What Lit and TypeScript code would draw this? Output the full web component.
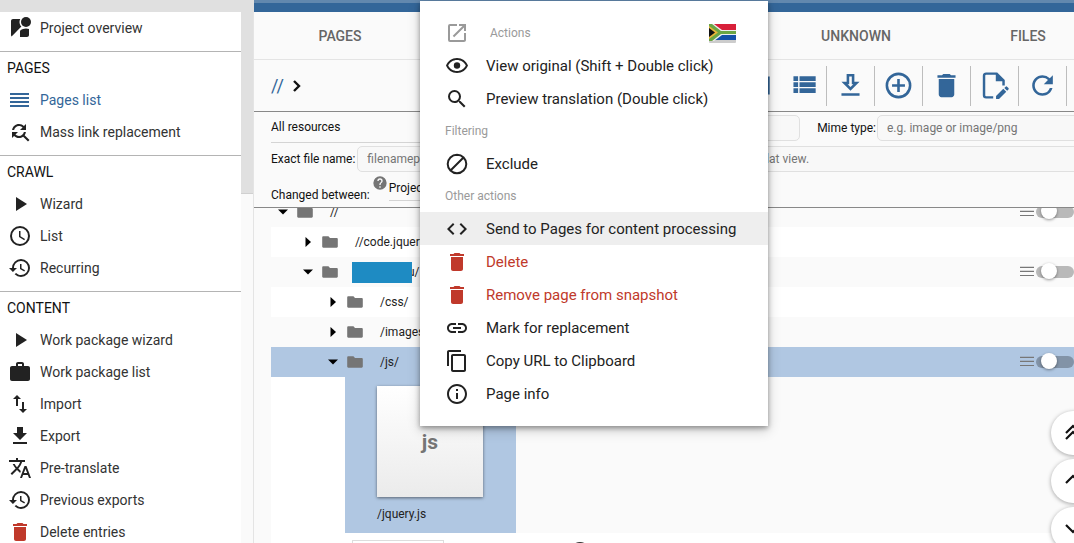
import { LitElement, html, css, svg, nothing } from "lit";
import { customElement, property } from "lit/decorators.js";
import { classMap } from "lit/directives/class-map.js";
import { styleMap } from "lit/directives/style-map.js";

const icons: Record<string, unknown> = {
  overview: svg`<path d="M12.56 14.33c-.34.27-.56.7-.56 1.17V21h7c1.1 0 2-.9 2-2v-5.98c-.94-.33-1.95-.52-3-.52-2.03 0-3.93.7-5.44 1.83z"/><circle cx="18" cy="6" r="5"/><path d="M11.5 6c0-1.08.27-2.1.74-3H5c-1.1 0-2 .9-2 2v14c0 .55.23 1.05.59 1.41l9.82-9.82C12.23 9.42 11.5 7.8 11.5 6z"/>`,
  lines: svg`<path d="M2 5h19v2H2zM2 9h19v2H2zM2 13h19v2H2zM2 17h19v2H2z"/>`,
  findReplace: svg`<path d="M11 6c1.38 0 2.63.56 3.54 1.46L12 10h6V4l-2.05 2.05C14.68 4.78 12.93 4 11 4c-3.53 0-6.43 2.61-6.92 6H6.1c.46-2.28 2.48-4 4.9-4zm5.64 9.14c.66-.9 1.12-1.97 1.28-3.14H15.9c-.46 2.28-2.48 4-4.9 4-1.38 0-2.63-.56-3.54-1.46L10 12H4v6l2.05-2.05C7.32 17.22 9.07 18 11 18c1.55 0 2.98-.51 4.14-1.36L20 21.49 21.49 20l-4.85-4.86z"/>`,
  play: svg`<path d="M8 5v14l11-7z"/>`,
  clock: svg`<path d="M12 2a10 10 0 1 0 0 20 10 10 0 0 0 0-20zm0 18a8 8 0 1 1 0-16 8 8 0 0 1 0 16zm.5-13H11v6l5.25 3.15.75-1.23-4.5-2.67z"/>`,
  history: svg`<path d="M13 3a9 9 0 0 0-9 9H1l3.89 3.89.07.14L9 12H6c0-3.87 3.13-7 7-7s7 3.13 7 7-3.13 7-7 7c-1.93 0-3.68-.79-4.94-2.06l-1.42 1.42A8.954 8.954 0 0 0 13 21a9 9 0 0 0 0-18zm-1 5v5l4.28 2.54.72-1.21-3.5-2.08V8H12z"/>`,
  work: svg`<path d="M20 6h-4V4c0-1.11-.89-2-2-2h-4c-1.11 0-2 .89-2 2v2H4c-1.11 0-1.99.89-1.99 2L2 19c0 1.11.89 2 2 2h16c1.11 0 2-.89 2-2V8c0-1.11-.89-2-2-2zm-6 0h-4V4h4v2z"/>`,
  importExport: svg`<path d="M9 3L5 6.99h3V14h2V6.99h3L9 3zm7 14.01V10h-2v7.01h-3L15 21l4-3.99h-3z"/>`,
  download: svg`<path d="M19 9h-4V3H9v6H5l7 7 7-7zM5 18v2h14v-2H5z"/>`,
  translate: svg`<path d="M12.87 15.07l-2.54-2.51.03-.03c1.74-1.94 2.98-4.17 3.71-6.53H17V4h-7V2H8v2H1v1.99h11.17C11.5 7.92 10.44 9.75 9 11.35 8.07 10.32 7.3 9.19 6.69 8h-2c.73 1.63 1.73 3.17 2.98 4.56l-5.09 5.02L4 19l5-5 3.11 3.11.76-2.04zM18.5 10h-2L12 22h2l1.12-3h4.75L21 22h2l-4.5-12zm-2.62 7l1.62-4.33L19.12 17h-3.24z"/>`,
  trash: svg`<path d="M6 19c0 1.1.9 2 2 2h8c1.1 0 2-.9 2-2V7H6v12zM19 4h-3.5l-1-1h-5l-1 1H5v2h14V4z"/>`,
  openInNew: svg`<path d="M19 19H5V5h7V3H5a2 2 0 0 0-2 2v14a2 2 0 0 0 2 2h14c1.1 0 2-.9 2-2v-7h-2v7zM14 3v2h3.59l-9.83 9.83 1.41 1.41L19 6.41V10h2V3h-7z"/>`,
  eye: svg`<path d="M12 6c3.79 0 7.17 2.13 8.82 5.5C19.17 14.87 15.79 17 12 17s-7.17-2.13-8.82-5.5C4.83 8.13 8.21 6 12 6m0-2C7 4 2.73 7.11 1 11.5 2.73 15.89 7 19 12 19s9.27-3.11 11-7.5C21.27 7.11 17 4 12 4z"/><circle cx="12" cy="11.5" r="3.2"/>`,
  search: svg`<path d="M15.5 14h-.79l-.28-.27A6.471 6.471 0 0 0 16 9.5 6.5 6.5 0 1 0 9.5 16c1.61 0 3.09-.59 4.23-1.57l.27.28v.79l5 4.99L20.49 19l-4.99-5zm-6 0C7.01 14 5 11.99 5 9.5S7.01 5 9.5 5 14 7.01 14 9.5 11.99 14 9.5 14z"/>`,
  exclude: svg`<path d="M12 2.700a9.300 9.300 0 1 0 0 18.600 9.300 9.300 0 0 0 0-18.600zM5.500 18.500L18.500 5.500" fill="none" stroke="currentColor" stroke-width="2"/>`,
  code: svg`<path d="M9.4 16.6L4.8 12l4.6-4.6L8 6l-6 6 6 6 1.4-1.4zm5.2 0l4.6-4.6-4.6-4.6L16 6l6 6-6 6-1.4-1.4z"/>`,
  link: svg`<path d="M3.9 12c0-1.71 1.39-3.1 3.1-3.1h4V7H7c-2.76 0-5 2.24-5 5s2.24 5 5 5h4v-1.9H7c-1.71 0-3.1-1.39-3.1-3.1zM8 13h8v-2H8v2zm9-6h-4v1.9h4c1.71 0 3.1 1.39 3.1 3.1s-1.39 3.1-3.1 3.1h-4V17h4c2.76 0 5-2.24 5-5s-2.24-5-5-5z"/>`,
  copy: svg`<path d="M16 1H4c-1.1 0-2 .9-2 2v14h2V3h12V1zm3 4H8c-1.1 0-2 .9-2 2v14c0 1.1.9 2 2 2h11c1.1 0 2-.9 2-2V7c0-1.1-.9-2-2-2zm0 16H8V7h11v14z"/>`,
  info: svg`<path d="M11 7h2v2h-2zm0 4h2v6h-2zm1-9C6.48 2 2 6.48 2 12s4.48 10 10 10 10-4.48 10-10S17.52 2 12 2zm0 18c-4.41 0-8-3.59-8-8s3.59-8 8-8 8 3.59 8 8-3.59 8-8 8z"/>`,
  chevron: svg`<path d="M6 4.500L13.500 12 6 19.500" fill="none" stroke="currentColor" stroke-width="3.600"/>`,
  grid: svg`<path d="M1 5h22v14H1zM3 7v4h5V7zm7 0v4h5V7zm7 0v4h4V7zM3 13v4h5v-4zm7 0v4h5v-4zm7 0v4h4v-4z" fill-rule="evenodd"/>`,
  viewList: svg`<path d="M5 4.800h3.600v3.700H5zM5 9.500h3.600v3.700H5zM5 14.200h3.600v3.700H5zM9.700 4.800h12.500v3.700H9.700zM9.700 9.500h12.500v3.700H9.700zM9.700 14.200h12.500v3.700H9.700z"/>`,
  downloadOutline: svg`<path d="M19 9h-4V3H9v6H5l7 7 7-7zm-8 2V5h2v6h1.170L12 13.170 9.830 11H11zm-6 7v2h14v-2H5z"/>`,
  addCircle: svg`<path d="M13 7h-2v4H7v2h4v4h2v-4h4v-2h-4V7zm-1-5a10 10 0 1 0 0 20 10 10 0 0 0 0-20zm0 18a8 8 0 1 1 0-16 8 8 0 0 1 0 16z"/>`,
  editDoc: svg`<path d="M11 21.200H5.500a1.600 1.600 0 0 1-1.600-1.600V4.400a1.600 1.600 0 0 1 1.600-1.600h8.200L19 8.100V12" fill="none" stroke="currentColor" stroke-width="1.900"/><path d="M13 2.500v6.300h6.500zM13.200 20.200v2.300h2.300l5.600-5.600-2.300-2.300zM19.600 13.900l2.200 2.200 1-1a.8.8 0 0 0 0-1.100l-1.100-1.100a.8.8 0 0 0-1.100 0z"/>`,
  refresh: svg`<path d="M17.650 6.350A7.958 7.958 0 0 0 12 4c-4.420 0-7.990 3.580-7.990 8s3.570 8 7.990 8c3.730 0 6.840-2.550 7.730-6h-2.080A5.990 5.990 0 0 1 12 18c-3.310 0-6-2.690-6-6s2.690-6 6-6c1.660 0 3.140.69 4.220 1.780L13 11h7V4l-2.350 2.350z"/>`,
  help: svg`<path d="M12 2a10 10 0 1 0 0 20 10 10 0 0 0 0-20zm1 17h-2v-2h2v2zm2.070-7.750l-.9.920C13.450 12.900 13 13.500 13 15h-2v-.5c0-1.100.45-2.100 1.170-2.830l1.240-1.260c.37-.36.59-.86.59-1.410a2 2 0 0 0-4 0H8a4 4 0 0 1 8 0c0 .88-.36 1.680-.93 2.250z"/>`,
  folder: svg`<path d="M2 3.500C1 3.500.3 4.200.3 5.200v13.600c0 1 .7 1.700 1.700 1.700h20c1 0 1.700-.7 1.700-1.700V7.600c0-1-.7-1.700-1.700-1.700H12L9.700 3.500z"/>`,
  caretRight: svg`<path d="M7 2l11 10L7 22z"/>`,
  caretDown: svg`<path d="M2 7l10 10L22 7z"/>`,
  rows: svg`<path d="M0 3h24v2H0zM0 10h24v2H0zM0 17h24v2H0z"/>`,
  doubleUp: svg`<path d="M5 12l7-7 7 7M5 18l7-7 7 7" fill="none" stroke="currentColor" stroke-width="2.200"/>`,
  up: svg`<path d="M5 14l7-7 7 7" fill="none" stroke="currentColor" stroke-width="2.200"/>`,
  down: svg`<path d="M5 8l7 7 7-7" fill="none" stroke="currentColor" stroke-width="2.200"/>`,
};

@customElement("ui-icon")
class UiIcon extends LitElement {
  @property() name = "";
  @property({ type: Number }) size = 24;
  static styles = css`
    :host { display: inline-flex; flex: none; }
    svg { display: block; fill: currentColor; }
  `;
  render() {
    return html`<svg viewBox="0 0 24 24" width=${this.size} height=${this.size} aria-hidden="true">${icons[this.name]}</svg>`;
  }
}

const sections = [
  { title: "", items: [["overview", "Project overview"]] },
  { title: "PAGES", items: [["lines", "Pages list", "active"], ["findReplace", "Mass link replacement"]] },
  { title: "CRAWL", items: [["play", "Wizard"], ["clock", "List"], ["history", "Recurring"]] },
  {
    title: "CONTENT",
    items: [
      ["play", "Work package wizard"],
      ["work", "Work package list"],
      ["importExport", "Import"],
      ["download", "Export"],
      ["translate", "Pre-translate"],
      ["history", "Previous exports"],
      ["trash", "Delete entries", "danger"],
    ],
  },
];

@customElement("side-nav")
class SideNav extends LitElement {
  static styles = css`
    :host { display: flex; background: #fff; overflow: hidden; }
    nav { flex: 1; min-width: 0; }
    section { padding-bottom: 7px; border-bottom: 1px solid #b4b4b4; }
    h2 { margin: 0; padding-left: 7px; font-size: 14px; font-weight: 400; line-height: 32px; color: #111; }
    a { display: flex; align-items: center; gap: 8px; height: 32px; padding-left: 8px; font-size: 14px; color: #333; text-decoration: none; white-space: nowrap; }
    ui-icon { color: #222; }
    .active, .active ui-icon { color: #336699; }
    .danger ui-icon { color: #c0392b; }
    .track { flex: none; width: 12px; background: #fafafa; border-right: 1px solid #e4e4e4; }
    .thumb { height: 181px; background: #e0e0e0; border-bottom: 1px solid #d0d0d0; }
  `;
  render() {
    return html`
      <nav>
        ${sections.map(
          (s) => html`<section>
            ${s.title ? html`<h2>${s.title}</h2>` : nothing}
            ${s.items.map(([icon, label, kind]) => html`<a href="#" class=${kind ?? ""}><ui-icon name=${icon}></ui-icon>${label}</a>`)}
          </section>`
        )}
      </nav>
      <div class="track"><div class="thumb"></div></div>
    `;
  }
}

@customElement("context-menu")
class ContextMenu extends LitElement {
  static styles = css`
    :host { display: block; padding: 16px 0; background: #fff; box-shadow: 0 2px 5px rgba(0, 0, 0, 0.35), 0 4px 12px rgba(0, 0, 0, 0.2); }
    header { display: flex; align-items: center; height: 32px; padding: 0 32px 0 25px; gap: 21px; font-size: 12px; color: #9a9a9a; }
    header span { flex: 1; }
    h3 { margin: 0; padding-left: 25px; font-size: 12px; font-weight: 400; line-height: 32px; color: #9a9a9a; }
    button { display: flex; align-items: center; gap: 17px; width: 100%; height: 33px; padding: 0 0 0 25px; border: 0; background: none; font: 15px Roboto, sans-serif; color: #222; white-space: nowrap; text-align: left; }
    .hover { background: #eee; }
    .danger { color: #c0392b; }
  `;
  item(icon: string, label: string, kind = "") {
    return html`<button class=${kind} role="menuitem"><ui-icon name=${icon}></ui-icon>${label}</button>`;
  }
  render() {
    return html`
      <header>
        <ui-icon name="openInNew"></ui-icon><span>Actions</span>
        <svg width="27" height="20" viewBox="0 0 27 20" role="img" aria-label="South Africa">
          <rect y="1" width="27" height="19" rx="1" fill="#ccc" />
          <path d="M2 1h25v6H10z" fill="#d8203a" />
          <path d="M2 17h25v-5H10z" fill="#1450a8" />
          <path d="M0 1h5l8 6h14v5H13l-8 6H0z" fill="#eee" />
          <path d="M0 1h3l9 7h15v3H12L3 18H0z" fill="#6ba544" />
          <path d="M0 3l9 6.500L0 16z" fill="#e8b53a" />
          <path d="M0 5l6 4.500L0 14z" fill="#111" />
        </svg>
      </header>
      ${this.item("eye", "View original (Shift + Double click)")}
      ${this.item("search", "Preview translation (Double click)")}
      <h3>Filtering</h3>
      ${this.item("exclude", "Exclude")}
      <h3>Other actions</h3>
      ${this.item("code", "Send to Pages for content processing", "hover")}
      ${this.item("trash", "Delete", "danger")}
      ${this.item("trash", "Remove page from snapshot", "danger")}
      ${this.item("link", "Mark for replacement")}
      ${this.item("copy", "Copy URL to Clipboard")}
      ${this.item("info", "Page info")}
    `;
  }
}

interface Row { level: number; open: boolean; label: string; masked?: boolean; toggle?: boolean; selected?: boolean; }

const rows: Row[] = [
  { level: 0, open: true, label: "//", toggle: true },
  { level: 1, open: false, label: "//code.jquery.com/" },
  { level: 1, open: true, label: "u/", masked: true, toggle: true },
  { level: 2, open: false, label: "/css/" },
  { level: 2, open: false, label: "/images/" },
  { level: 2, open: true, label: "/js/", toggle: true, selected: true },
];

@customElement("resource-tree")
class ResourceTree extends LitElement {
  static styles = css`
    :host { display: block; overflow: hidden; padding-left: 17px; }
    .list { margin-top: -11px; }
    .row { display: flex; align-items: center; height: 30px; font-size: 12px; color: #222; }
    .row:nth-child(even) { background: #fff; }
    .row.selected { background: #b0c7e2; }
    .caret { color: #000; margin: 0 8px 0 6px; }
    .folder { color: #757575; margin-right: 17px; }
    .label { flex: 1; display: flex; align-items: center; }
    .mask { width: 60px; height: 21px; margin: 0 -4px 0 -3px; background: #1e8bc3; z-index: 1; }
    .handle { color: #777; margin-right: 2px; }
    .switch { appearance: none; position: relative; flex: none; width: 38px; height: 12px; margin: 0; border-radius: 6px; background: rgba(0, 0, 0, 0.26); }
    .switch::before { content: ""; position: absolute; left: 5px; top: -3px; width: 16px; height: 16px; border-radius: 50%; background: #fff; box-shadow: 0 1px 3px rgba(0, 0, 0, 0.4); }
    .files { display: flex; }
    .gutter { flex: none; width: 74px; background: #fff; }
    .tile { flex: none; width: 171px; padding: 9px 31px 10px 32px; box-sizing: border-box; background: #b0c7e2; font-size: 12px; color: #222; }
    .sheet { display: grid; place-items: center; width: 106px; height: 111px; background: linear-gradient(#fff, #ebebeb); box-shadow: 0 1px 3px rgba(0, 0, 0, 0.5); font-size: 21px; font-weight: 700; color: #757575; }
    .name { line-height: 16px; padding-top: 9px; padding-bottom: 1px; }
    .more { display: flex; align-items: flex-start; height: 30px; padding: 7px 0 0 81px; gap: 124px; background: #fff; color: #333; }
    .more button { width: 92px; height: 24px; border: 1px solid #ddd; background: #fff; }
  `;
  render() {
    return html`<div class="list">
        ${rows.map(
          (r) => html`<div class=${classMap({ row: true, selected: !!r.selected })} style=${styleMap({ paddingLeft: r.level * 25 + "px" })}>
            <ui-icon class="caret" name=${r.open ? "caretDown" : "caretRight"} size="12"></ui-icon>
            <ui-icon class="folder" name="folder" size="16"></ui-icon>
            <span class="label">${r.masked ? html`<span class="mask"></span>` : nothing}${r.label}</span>
            ${r.toggle
              ? html`<ui-icon class="handle" name="rows" size="14"></ui-icon><input class="switch" type="checkbox" role="switch" aria-label="Enable ${r.label}" />`
              : nothing}
          </div>`
        )}
      </div>
      <div class="files">
        <div class="gutter"></div>
        <div class="tile">
          <div class="sheet">js</div>
          <div class="name">/jquery.js</div>
        </div>
      </div>
      <div class="more"><button aria-label="Load more"></button><ui-icon name="info" size="24"></ui-icon></div>`;
  }
}

@customElement("app-root")
class AppRoot extends LitElement {
  static styles = css`
    :host { position: relative; display: grid; grid-template: 12px minmax(0, 1fr) / 254px minmax(0, 1fr); height: 100vh; overflow: hidden; font-family: Roboto, sans-serif; background: #fafafa; color: #111; }
    .corner { background: #e0e0e0; }
    .banner { box-sizing: border-box; background: #336699; border-top: 3px solid #6288ae; }
    main { display: flex; flex-direction: column; min-width: 0; }
    .tabs { display: grid; grid-template-columns: repeat(5, 172px); height: 47px; border-bottom: 1px solid #e4e4e4; overflow: hidden; }
    .tabs button { border: 0; padding: 0; background: none; font: 500 14px Roboto, sans-serif; color: #666; }
    .unknown { grid-column: 4; }
    .toolbar { display: flex; align-items: center; height: 51px; padding: 0 7px 0 17px; border-bottom: 1px solid #888; }
    .crumb { font-size: 18px; color: #336699; text-decoration: none; margin-right: 6px; }
    .tools { display: flex; margin-left: auto; }
    .tools button { display: grid; place-items: center; box-sizing: border-box; width: 48px; height: 40px; padding: 0; border: 0; border-right: 1px solid #bdbdbd; background: none; color: #336699; }
    .tools button:first-child { border: 0; }
    .filters { display: grid; grid-template-rows: 31px 32px 32px; padding-left: 17px; border-bottom: 1px solid #888; font-size: 12px; }
    .line { display: flex; align-items: center; min-width: 0; }
    input, select { box-sizing: border-box; height: 26px; font: 12px Roboto, sans-serif; color: #111; }
    input { padding: 0 9px; border: 1px solid #e0e0e0; border-radius: 5px; background: #f8f8f8; }
    input::placeholder { color: #757575; opacity: 1; }
    select { appearance: none; padding: 0; border: 0; border-bottom: 1px solid #d4d4d4; border-radius: 0; background: none; }
    .scope { height: 31px; flex: 0 1 200px; }
    .query { flex: 1; margin-right: 17px; }
    .mime { flex: 0 0 220px; margin: 0 -23px 0 1px; }
    .pattern { flex: 1; margin: 0 -5px 0 2px; }
    .between { align-items: flex-start; }
    .between label { line-height: 16px; padding-top: 12px; }
    .between ui-icon { color: #757575; margin-left: 2px; }
    .between select { width: 200px; margin-left: 1px; }
    resource-tree { flex: 1; min-height: 0; }
    context-menu { position: absolute; left: 420px; top: 1px; width: 348px; box-sizing: border-box; }
    .floating { position: absolute; right: -21px; top: 411px; display: grid; gap: 4px; }
    .floating button { display: grid; place-items: center; width: 44px; height: 44px; padding: 0; border: 0; border-radius: 50%; background: #fff; color: #111; box-shadow: 0 1px 4px rgba(0, 0, 0, 0.35); }
  `;
  render() {
    const tools = [
      ["grid", "Table view"],
      ["viewList", "List view"],
      ["downloadOutline", "Download"],
      ["addCircle", "Add"],
      ["trash", "Delete"],
      ["editDoc", "Edit"],
      ["refresh", "Refresh"],
    ];
    return html`
      <div class="corner"></div>
      <div class="banner"></div>
      <side-nav></side-nav>
      <main>
        <div class="tabs">
          <button>PAGES</button><button class="unknown">UNKNOWN</button><button>FILES</button>
        </div>
        <div class="toolbar">
          <a class="crumb" href="#">//</a><ui-icon name="chevron" size="16"></ui-icon>
          <div class="tools">
            ${tools.map(([icon, label]) => html`<button aria-label=${label}><ui-icon name=${icon} size="31"></ui-icon></button>`)}
          </div>
        </div>
        <div class="filters">
          <div class="line">
            <select class="scope" aria-label="Resources"><option>All resources</option></select>
            <input class="query" aria-label="Query" />
            <label for="mime">Mime type:</label><input class="mime" id="mime" placeholder="e.g. image or image/png" />
          </div>
          <div class="line">
            <label for="pattern">Exact file name:</label>
            <input class="pattern" id="pattern" placeholder="filenamepart.html matches the complete name of files and applies only to flat view." />
          </div>
          <div class="line between">
            <label for="from">Changed between:</label><ui-icon name="help" size="16"></ui-icon>
            <select id="from"><option>Project start</option></select>
          </div>
        </div>
        <resource-tree></resource-tree>
      </main>
      <div class="floating">
        <button aria-label="To top"><ui-icon name="doubleUp"></ui-icon></button>
        <button aria-label="Up"><ui-icon name="up"></ui-icon></button>
        <button aria-label="Down"><ui-icon name="down"></ui-icon></button>
      </div>
      <context-menu role="menu"></context-menu>
    `;
  }
}
